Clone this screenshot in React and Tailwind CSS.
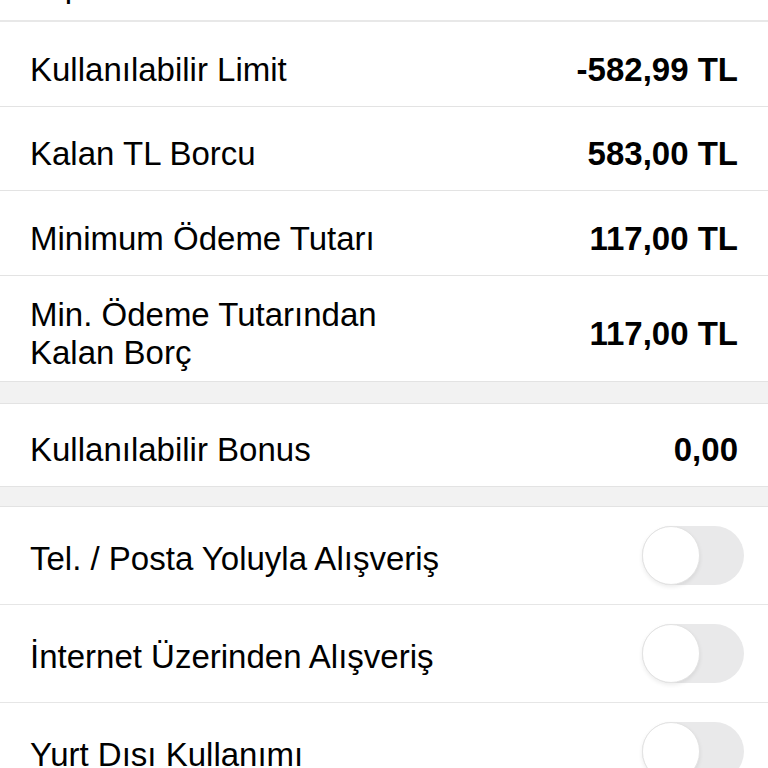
const rows = [
  { label: "Kullanılabilir Limit", value: "-582,99 TL", h: "h-[85px]" },
  { label: "Kalan TL Borcu", value: "583,00 TL", h: "h-[84px]" },
  { label: "Minimum Ödeme Tutarı", value: "117,00 TL", h: "h-[85px]" },
];

const switches = ["Tel. / Posta Yoluyla Alışveriş", "İnternet Üzerinden Alışveriş", "Yurt Dısı Kullanımı"];

function Toggle() {
  return (
    <div className="relative h-[59px] w-[102px] rounded-full bg-[#e9e9ea]">
      <div className="absolute left-0 top-0 h-[59px] w-[58px] rounded-full border border-[#e3e3e3] bg-white shadow-[0_2px_4px_rgba(0,0,0,0.08)]" />
    </div>
  );
}

export default function App() {
  return (
    <div className="h-[768px] w-[768px] overflow-hidden bg-white text-black [font-family:'Liberation_Sans',Arial,sans-serif]">
      <div className="mt-[-63px] flex h-[85px] items-center justify-between border-b-2 border-[#e8e8e8] px-[30px] pt-[14px] text-[33px]">
        <span>Toplam Limit</span>
      </div>
      {rows.map((r) => (
        <div
          key={r.label}
          className={`flex ${r.h} items-center justify-between border-b border-[#e3e3e3] px-[30px] pt-[11px] text-[33px]`}
        >
          <span>{r.label}</span>
          <span className="font-bold">{r.value}</span>
        </div>
      ))}
      <div className="flex h-[106px] items-center justify-between border-b border-[#e3e3e3] px-[30px] pt-[11px] text-[33px]">
        <span className="leading-[38px]">
          Min. Ödeme Tutarından
          <br />
          Kalan Borç
        </span>
        <span className="font-bold">117,00 TL</span>
      </div>
      <div className="h-[22px] border-b border-[#e3e3e3] bg-[#f2f2f2]" />
      <div className="flex h-[83px] items-center justify-between border-b border-[#e3e3e3] px-[30px] pt-[9px] text-[33px]">
        <span>Kullanılabilir Bonus</span>
        <span className="font-bold">0,00</span>
      </div>
      <div className="h-[20px] border-b border-[#e3e3e3] bg-[#f2f2f2]" />
      {switches.map((s) => (
        <div
          key={s}
          className="flex h-[98px] items-center justify-between border-b border-[#e6e6e6] pl-[30px] pr-[24px] text-[33px]"
        >
          <span className="pt-[6px]">{s}</span>
          <Toggle />
        </div>
      ))}
    </div>
  );
}
